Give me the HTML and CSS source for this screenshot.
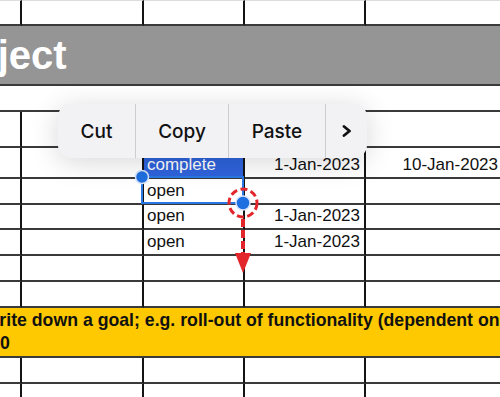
FILE: index.html
```html
<!DOCTYPE html>
<html lang="en">
<head>
    <meta charset="UTF-8">
    <meta name="viewport" content="width=device-width, initial-scale=1.0">
    <title>Project sheet</title>
    <link rel="stylesheet" href="styles.css">
</head>
<body>
    <div class="sheet">
        <!-- row A -->
        <div class="cell top"></div><div class="cell top"></div><div class="cell top"></div><div class="cell top"></div><div class="cell top"></div>

        <div class="cell title"><span class="title-text">Project</span></div>
        <div class="cell wide h26"></div>

        <!-- row D -->
        <div class="cell h36"></div><div class="cell h36"></div><div class="cell h36"></div><div class="cell h36"></div><div class="cell h36"></div>

        <!-- row E -->
        <div class="cell h31"></div><div class="cell h31"></div>
        <div class="cell h31 selected">complete</div>
        <div class="cell h31 right">1-Jan-2023</div>
        <div class="cell h31 right">10-Jan-2023</div>

        <div class="cell h26"></div><div class="cell h26"></div><div class="cell h26">open</div><div class="cell h26"></div><div class="cell h26"></div>
        <div class="cell h25"></div><div class="cell h25"></div><div class="cell h25">open</div><div class="cell h25 right">1-Jan-2023</div><div class="cell h25"></div>
        <div class="cell h26"></div><div class="cell h26"></div><div class="cell h26">open</div><div class="cell h26 right">1-Jan-2023</div><div class="cell h26"></div>
        <div class="cell h26"></div><div class="cell h26"></div><div class="cell h26"></div><div class="cell h26"></div><div class="cell h26"></div>
        <div class="cell h26"></div><div class="cell h26"></div><div class="cell h26"></div><div class="cell h26"></div><div class="cell h26"></div>

        <div class="cell goal">
            <div class="goal-line first">Write down a goal; e.g. roll-out of functionality (dependent on</div>
            <div class="goal-line">0</div>
        </div>

        <div class="cell h26"></div><div class="cell h26"></div><div class="cell h26"></div><div class="cell h26"></div><div class="cell h26"></div>
        <div class="cell h26"></div><div class="cell h26"></div><div class="cell h26"></div><div class="cell h26"></div><div class="cell h26"></div>
    </div>

    <svg class="overlay" width="500" height="397" viewBox="0 0 500 397">
        <rect x="142" y="177" width="101" height="26" fill="none" stroke="#2a78e4" stroke-width="2"/>
        <circle cx="142" cy="177" r="6.5" fill="#1e6fe0" stroke="#d4e3fb" stroke-width="1.5"/>
        <circle cx="243" cy="203" r="7" fill="#1e6fe0" stroke="#d4e3fb" stroke-width="1.5"/>
        <circle cx="243" cy="203" r="14" fill="none" stroke="#e3262b" stroke-width="3" stroke-dasharray="7 3.5"/>
        <line x1="243" y1="219" x2="243" y2="256" stroke="#e3262b" stroke-width="4" stroke-dasharray="8 3"/>
        <polygon points="235,253 251,253 243,273" fill="#e3262b"/>
    </svg>

    <div class="menu">
        <div class="menu-item cut">Cut</div>
        <div class="menu-item copy">Copy</div>
        <div class="menu-item paste">Paste</div>
        <div class="menu-item more">
            <svg width="10" height="12" viewBox="0 0 10 12"><path d="M2 1.5 L7.5 6 L2 10.5" fill="none" stroke="#111" stroke-width="2.8" stroke-linecap="round" stroke-linejoin="round"/></svg>
        </div>
    </div>
</body>
</html>
```

FILE: styles.css
```css
body {
    margin: 0;
    width: 500px;
    height: 397px;
    overflow: hidden;
    position: relative;
    background: #fff;
    font-family: 'Liberation Sans', Arial, sans-serif;
    color: #111;
}

.sheet {
    display: grid;
    grid-template-columns: 22px 122px 101px 121px 138px;
}

.cell {
    box-sizing: border-box;
    border-right: 2px solid #141414;
    border-bottom: 2px solid #3a3a3a;
    font-size: 17px;
    line-height: 20px;
    padding: 0 4px 2px 3px;
    display: flex;
    align-items: flex-end;
    white-space: nowrap;
    overflow: hidden;
}

.top {
    height: 26px;
    border-top: 1px solid #dcdcdc;
}

.h25 { height: 25px; }
.h26 { height: 26px; }
.h31 { height: 31px; }
.h36 { height: 36px; }

.wide {
    grid-column: 1 / -1;
    border-right: none;
}

.right {
    justify-content: flex-end;
}

.selected {
    background: #2f63dc;
    color: #fff;
}

.title {
    grid-column: 1 / -1;
    height: 60px;
    background: #959595;
    border-right: none;
    align-items: center;
    padding: 0;
}

.title-text {
    margin-left: -69px;
    color: #fff;
    font-weight: bold;
    font-size: 40px;
    line-height: 46px;
}

.goal {
    grid-column: 1 / -1;
    height: 50px;
    background: #fec900;
    border-right: none;
    display: block;
    padding: 1px 0 0 0;
    font-weight: bold;
    font-size: 17.7px;
    line-height: 23px;
}

.goal-line.first {
    margin-left: -17px;
}

.overlay {
    position: absolute;
    left: 0;
    top: 0;
}

.menu {
    position: absolute;
    left: 58px;
    top: 104px;
    width: 309px;
    height: 54px;
    display: flex;
    background: #f2f2f5;
    border-radius: 13px;
    box-shadow: 0 4px 28px rgba(0, 0, 0, 0.16);
    overflow: hidden;
    font-family: Inter, 'Noto Sans', sans-serif;
    font-size: 19px;
    font-weight: 500;
    color: #111;
}

.menu-item {
    display: flex;
    align-items: center;
    justify-content: center;
    border-right: 1px solid #cdcdd1;
}

.cut { width: 77px; }
.copy { width: 92px; }
.paste { width: 96px; }
.more {
    flex: 1;
    border-right: none;
}
```
